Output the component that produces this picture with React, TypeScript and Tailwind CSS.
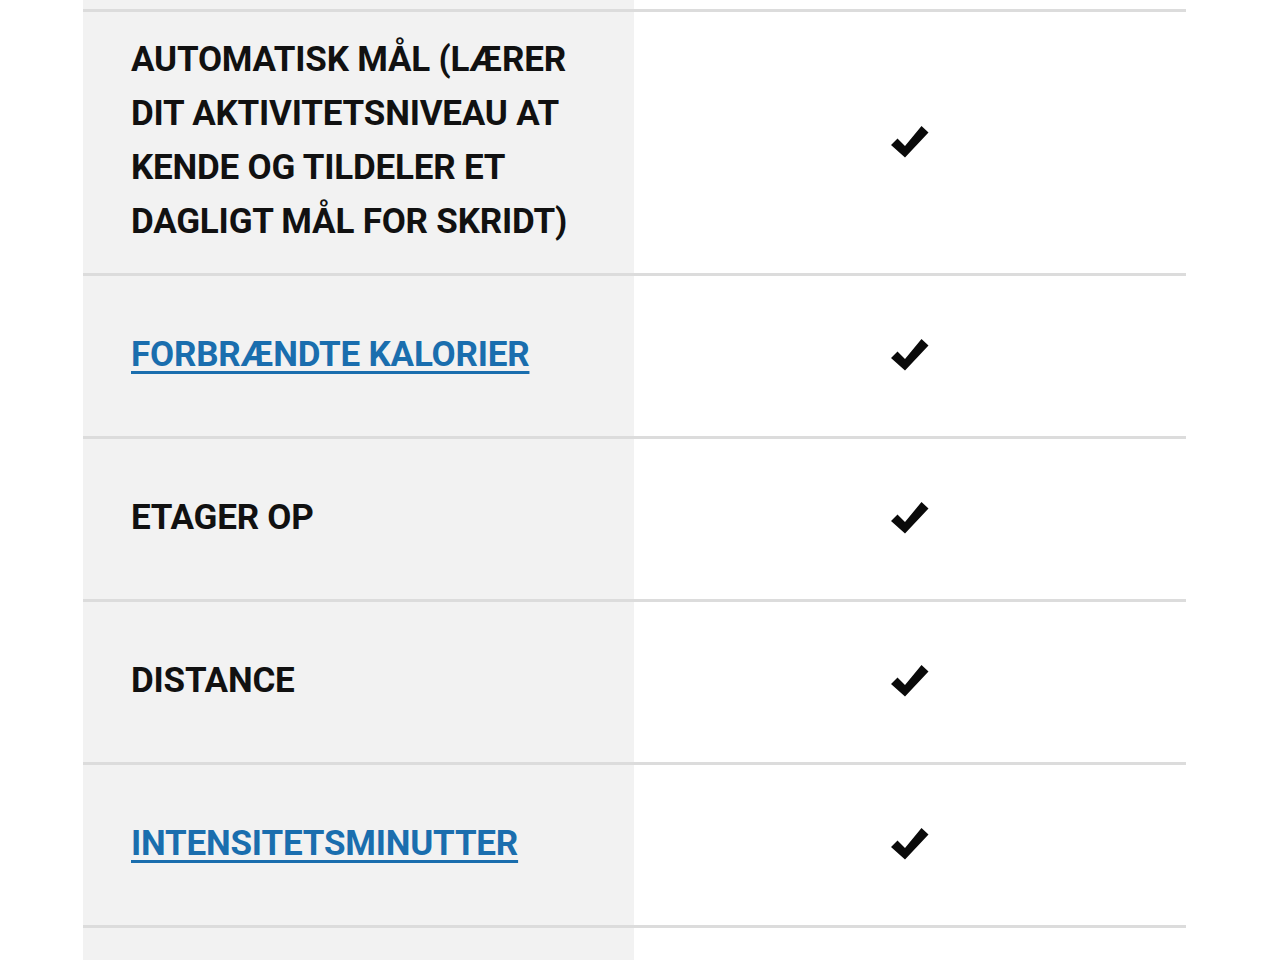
type Row = {
  lines: string[];
  link?: boolean;
};

const rows: Row[] = [
  {
    lines: [
      "AUTOMATISK MÅL (LÆRER",
      "DIT AKTIVITETSNIVEAU AT",
      "KENDE OG TILDELER ET",
      "DAGLIGT MÅL FOR SKRIDT)",
    ],
  },
  { lines: ["FORBRÆNDTE KALORIER"], link: true },
  { lines: ["ETAGER OP"] },
  { lines: ["DISTANCE"] },
  { lines: ["INTENSITETSMINUTTER"], link: true },
  { lines: ["BEVÆGELSESBJÆLKE (VISES PÅ"] },
];

function Check() {
  return (
    <svg width="42" height="36" viewBox="0 0 42 36" className="translate-y-[-2px]">
      <polygon points="2,22 8.5,15.5 16,23 32.5,3 39.5,9.5 16,34.5" fill="#0a0a0a" />
    </svg>
  );
}

function FeatureRow({ row }: { row: Row }) {
  return (
    <div className="grid grid-cols-[551px_1fr] border-t-[3px] border-[#dcdcdc]">
      <div className="flex min-h-[160px] items-center bg-[#f2f2f2] px-[48px] pt-[21px] pb-[24px]">
        {row.link ? (
          <a
            href="#"
            className="text-[#1a6eae] underline decoration-[3px] underline-offset-[5px]"
          >
            {row.lines[0]}
          </a>
        ) : (
          <span className="text-[#111111]">
            {row.lines.map((l, i) => (
              <span key={i} className="block">
                {l}
              </span>
            ))}
          </span>
        )}
      </div>
      <div className="flex items-center justify-center">
        <Check />
      </div>
    </div>
  );
}

export default function App() {
  return (
    <div
      className="h-[960px] overflow-hidden bg-white pl-[83px] pr-[94px] text-[35px] font-bold leading-[54px] tracking-[-0.2px]"
      style={{ fontFamily: "Roboto, 'Noto Sans', sans-serif" }}
    >
      <div className="grid h-[9px] grid-cols-[551px_1fr]">
        <div className="bg-[#f2f2f2]" />
        <div />
      </div>
      {rows.map((r, i) => (
        <FeatureRow key={i} row={r} />
      ))}
    </div>
  );
}
